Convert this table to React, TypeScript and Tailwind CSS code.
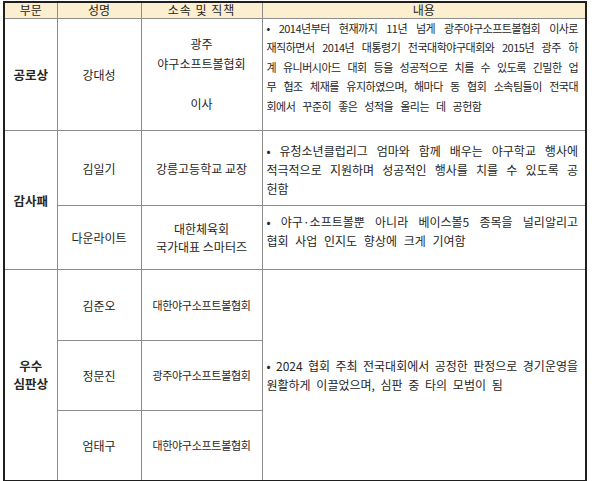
const cellLine = "border border-[#8c8c8c]";

const Justified = ({ lines, lastClass = "" }: { lines: string[]; lastClass?: string }) => (
  <div>
    {lines.map((line, i) => (
      <div
        key={i}
        className={i < lines.length - 1 ? "text-justify [text-align-last:justify]" : `text-left ${lastClass}`}
      >
        {line}
      </div>
    ))}
  </div>
);

export default function App() {
  return (
    <div className="w-[600px] h-[481px] bg-white font-['Noto_Sans_CJK_KR',sans-serif] text-[#262626]">
      <table className="ml-[3px] mt-[1px] table-fixed border-collapse border-2 border-[#1f1f1f] w-[582px]">
        <colgroup>
          <col className="w-[53px]" />
          <col className="w-[84px]" />
          <col className="w-[121px]" />
          <col className="w-[324px]" />
        </colgroup>
        <thead>
          <tr className="h-[16px] bg-[#fcefcf] text-[12px] leading-[14px]">
            <th className={`${cellLine} border-t-2 border-t-[#1f1f1f] font-normal p-0`}>부문</th>
            <th className={`${cellLine} border-t-2 border-t-[#1f1f1f] font-normal p-0`}>성명</th>
            <th className={`${cellLine} border-t-2 border-t-[#1f1f1f] font-normal p-0 tracking-[1px]`}>소속 및 직책</th>
            <th className={`${cellLine} border-t-2 border-t-[#1f1f1f] font-normal p-0`}>내용</th>
          </tr>
        </thead>
        <tbody className="text-[12px] leading-[19px]">
          <tr className="h-[111px]">
            <td className={`${cellLine} border-l-2 border-l-[#1f1f1f] text-center font-bold text-[12.5px] p-0`}>공로상</td>
            <td className={`${cellLine} text-center p-0`}>강대성</td>
            <td className={`${cellLine} text-center p-0 leading-[20px]`}>
              <div>광주</div>
              <div>야구소프트볼협회</div>
              <div>&nbsp;</div>
              <div>이사</div>
            </td>
            <td className={`${cellLine} border-r-2 border-r-[#1f1f1f] pl-[4px] pr-[7px] pb-[14px] text-[11px] tracking-[-0.5px] leading-[19.5px]`}>
              <Justified
                lastClass="[word-spacing:5px]"
                lines={[
                  "• 2014년부터 현재까지 11년 넘게 광주야구소프트볼협회 이사로",
                  "재직하면서 2014년 대통령기 전국대학야구대회와 2015년 광주 하",
                  "계 유니버시아드 대회 등을 성공적으로 치를 수 있도록 긴밀한 업",
                  "무 협조 체재를 유지하였으며, 해마다 동 협회 소속팀들이 전국대",
                  "회에서 꾸준히 좋은 성적을 올리는 데 공헌함",
                ]}
              />
            </td>
          </tr>
          <tr className="h-[75px]">
            <td rowSpan={2} className={`${cellLine} border-l-2 border-l-[#1f1f1f] text-center font-bold text-[12.5px] p-0`}>감사패</td>
            <td className={`${cellLine} text-center p-0`}>김일기</td>
            <td className={`${cellLine} text-center p-0`}>강릉고등학교 교장</td>
            <td className={`${cellLine} border-r-2 border-r-[#1f1f1f] pl-[4px] pr-[7px] pt-[2px]`}>
              <Justified
                lines={[
                  "• 유청소년클럽리그 엄마와 함께 배우는 야구학교 행사에",
                  "적극적으로 지원하며 성공적인 행사를 치를 수 있도록 공",
                  "헌함",
                ]}
              />
            </td>
          </tr>
          <tr className="h-[64px]">
            <td className={`${cellLine} text-center p-0`}>다운라이트</td>
            <td className={`${cellLine} text-center p-0 leading-[18px]`}>
              <div>대한체육회</div>
              <div>국가대표 스마터즈</div>
            </td>
            <td className={`${cellLine} border-r-2 border-r-[#1f1f1f] pl-[4px] pr-[7px] pb-[14px]`}>
              <Justified
                lastClass="[word-spacing:4px]"
                lines={[
                  "• 야구·소프트볼뿐 아니라 베이스볼5 종목을 널리알리고",
                  "협회 사업 인지도 향상에 크게 기여함",
                ]}
              />
            </td>
          </tr>
          <tr className="h-[71px]">
            <td rowSpan={3} className={`${cellLine} border-l-2 border-l-[#1f1f1f] border-b-2 border-b-[#1f1f1f] text-center font-bold text-[12.5px] leading-[18px] p-0`}>
              <div>우수</div>
              <div>심판상</div>
            </td>
            <td className={`${cellLine} text-center p-0`}>김준오</td>
            <td className={`${cellLine} text-center p-0 text-[11px] tracking-[-0.3px]`}>대한야구소프트볼협회</td>
            <td rowSpan={3} className={`${cellLine} border-r-2 border-r-[#1f1f1f] border-b-2 border-b-[#1f1f1f] pl-[4px] pr-[7px]`}>
              <Justified
                lastClass="[word-spacing:3px]"
                lines={[
                  "• 2024 협회 주최 전국대회에서 공정한 판정으로 경기운영을",
                  "원활하게 이끌었으며, 심판 중 타의 모범이 됨",
                ]}
              />
            </td>
          </tr>
          <tr className="h-[70px]">
            <td className={`${cellLine} text-center p-0`}>정문진</td>
            <td className={`${cellLine} text-center p-0 text-[11px] tracking-[-0.3px]`}>광주야구소프트볼협회</td>
          </tr>
          <tr className="h-[70px]">
            <td className={`${cellLine} border-b-2 border-b-[#1f1f1f] text-center p-0`}>엄태구</td>
            <td className={`${cellLine} border-b-2 border-b-[#1f1f1f] text-center p-0 text-[11px] tracking-[-0.3px]`}>대한야구소프트볼협회</td>
          </tr>
        </tbody>
      </table>
    </div>
  );
}
